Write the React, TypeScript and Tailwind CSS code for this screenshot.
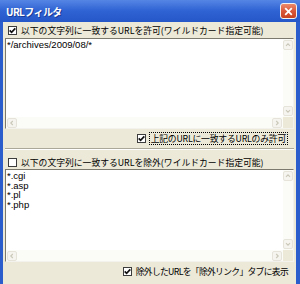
import React from "react";

type Dir = "up" | "down" | "left" | "right";

const arrowPaths: Record<Dir, string> = {
  up: "M2.5 6 L5 3.5 L7.5 6",
  down: "M2.5 4 L5 6.5 L7.5 4",
  left: "M6 2.5 L3.5 5 L6 7.5",
  right: "M4 2.5 L6.5 5 L4 7.5",
};

function ArrowButton({ dir }: { dir: Dir }) {
  return (
    <div className="flex h-[10px] w-[10px] items-center justify-center rounded-[2px] border border-[#e6e4da] bg-[#f5f4ef]">
      <svg width="10" height="10" viewBox="0 0 10 10">
        <path d={arrowPaths[dir]} fill="none" stroke="#cac7b8" strokeWidth="1.4" />
      </svg>
    </div>
  );
}

function CheckBox({ checked }: { checked?: boolean }) {
  return (
    <span className="flex h-[9px] w-[9px] shrink-0 items-center justify-center border border-[#3c3c3c] bg-white">
      {checked && (
        <svg width="7" height="7" viewBox="0 0 7 7">
          <path d="M0.7 3.3 L2.6 5.3 L6.3 1.3" fill="none" stroke="#111" strokeWidth="1.7" />
        </svg>
      )}
    </span>
  );
}

function ListBox({ lines, height }: { lines: string[]; height: string }) {
  return (
    <div
      className={`grid grid-cols-[1fr_10px] grid-rows-[1fr_11px] border border-t-[#7b786d] border-l-[#7b786d] border-r-[#f3f2ec] border-b-[#f3f2ec] bg-white ${height}`}
    >
      <div className="px-[1px] pt-[1px] font-['Liberation_Sans',sans-serif] text-[9.5px] leading-[9.5px] text-black">
        {lines.map((l) => (
          <div key={l} className="h-[9.5px]">
            {l}
          </div>
        ))}
      </div>
      <div className="flex flex-col justify-between bg-[#fbfbf8] py-[1px]">
        <ArrowButton dir="up" />
        <ArrowButton dir="down" />
      </div>
      <div className="flex items-center justify-between bg-[#fbfbf8] px-[1px]">
        <ArrowButton dir="left" />
        <ArrowButton dir="right" />
      </div>
      <div className="bg-[#ece9d8]" />
    </div>
  );
}

export default function App() {
  return (
    <div className="flex h-[284px] w-[300px] flex-col overflow-hidden bg-[#2c5dcc] font-['Noto_Sans_CJK_JP',sans-serif] text-[8.8px] text-black">
      {/* title bar */}
      <div className="flex h-[22px] shrink-0 items-center justify-between bg-gradient-to-b from-[#5585e4] via-[#2f62d3] to-[#2657c8] pl-[6px] pr-[3px]">
        <span className="text-[10px] font-bold tracking-[-0.6px] text-white [text-shadow:1px_1px_0_#1a3c96]">
          URLフィルタ
        </span>
        <div className="flex h-[16px] w-[17px] items-center justify-center rounded-[3px] border border-[#f2f2f2] bg-gradient-to-b from-[#ec8a6a] via-[#d9573a] to-[#c8421f]">
          <svg width="9" height="9" viewBox="0 0 9 9">
            <path d="M1.2 1.2 L7.8 7.8 M7.8 1.2 L1.2 7.8" stroke="#fff" strokeWidth="1.8" />
          </svg>
        </div>
      </div>

      {/* client area */}
      <div className="ml-[3px] mr-[4px] flex flex-1 flex-col bg-[#ece9d8] pl-[2px] pr-[2px]">
        <div className="flex h-[16px] shrink-0 items-center gap-[4px] pl-[3px] pt-[1px]">
          <CheckBox checked />
          <span>以下の文字列に一致するURLを許可(ワイルドカード指定可能)</span>
        </div>

        <ListBox lines={["*/archives/2009/08/*"]} height="h-[91px]" />

        <div className="flex h-[19px] shrink-0 items-center justify-end gap-[3px] pr-[6px]">
          <CheckBox checked />
          <span className="border border-dotted border-black px-[1px] leading-[11px] tracking-[-0.2px]">
            上記のURLに一致するURLのみ許可
          </span>
        </div>

        <div className="h-[2px] shrink-0 border-t border-b border-t-[#aca899] border-b-white" />

        <div className="flex h-[19px] shrink-0 items-center gap-[4px] pl-[3px] pt-[6px]">
          <CheckBox />
          <span>以下の文字列に一致するURLを除外(ワイルドカード指定可能)</span>
        </div>

        <ListBox lines={["*.cgi", "*.asp", "*.pl", "*.php"]} height="h-[93px]" />

        <div className="flex flex-1 items-start justify-end gap-[4px] pr-[6px] pt-[5px]">
          <CheckBox checked />
          <span className="leading-[10px] tracking-[-0.7px]">除外したURLを「除外リンク」タブに表示</span>
        </div>
      </div>
    </div>
  );
}
